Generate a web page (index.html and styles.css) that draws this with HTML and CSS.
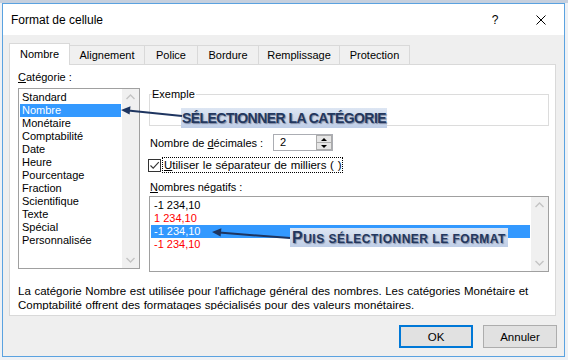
FILE: index.html
```html
<!DOCTYPE html>
<html>

<head>
	<title>Format de cellule</title>
	<link rel="stylesheet" href="styles.css">
</head>
<body>
<div id="screen">
	<div class="dialog">
		<div class="titlebar">
			<span class="title">Format de cellule</span>
			<span class="capbtn help">?</span>
			<span class="capbtn">
				<svg width="10" height="10" viewBox="0 0 10 10"><path d="M0.5 0.5 L9.5 9.5 M9.5 0.5 L0.5 9.5" stroke="#000" stroke-width="1" fill="none"/></svg>
			</span>
		</div>
		<div class="dlg-body">
			<div class="tabs">
				<div class="tab active" style="width:61px">Nombre</div>
				<div class="tab" style="width:76px">Alignement</div>
				<div class="tab" style="width:54px">Police</div>
				<div class="tab" style="width:62px">Bordure</div>
				<div class="tab" style="width:82px">Remplissage</div>
				<div class="tab" style="width:71px">Protection</div>
			</div>
			<div class="panel">
				<div class="cols">
					<div class="left-col">
						<div class="lbl"><u>C</u>atégorie :</div>
						<div class="listbox cat-list">
							<div class="items">
								<div class="item">Standard</div>
								<div class="item selected">Nombre</div>
								<div class="item">Monétaire</div>
								<div class="item">Comptabilité</div>
								<div class="item">Date</div>
								<div class="item">Heure</div>
								<div class="item">Pourcentage</div>
								<div class="item">Fraction</div>
								<div class="item">Scientifique</div>
								<div class="item">Texte</div>
								<div class="item">Spécial</div>
								<div class="item">Personnalisée</div>
							</div>
							<div class="scrollbar">
								<svg width="17" height="17" viewBox="0 0 17 17"><path d="M4.5 10 L8.5 6 L12.5 10" stroke="#c4c4c4" stroke-width="1.4" fill="none"/></svg>
								<svg width="17" height="17" viewBox="0 0 17 17"><path d="M4.5 7 L8.5 11 L12.5 7" stroke="#c4c4c4" stroke-width="1.4" fill="none"/></svg>
							</div>
						</div>
					</div>
					<div class="right-col">
						<fieldset class="example">
							<legend>Exemple</legend>
							<div class="example-in"></div>
						</fieldset>
						<div class="row decimals">
							<span class="row-lbl">Nombre de <u>d</u>écimales :</span>
							<div class="spinner">
								<span class="spin-val">2</span>
								<div class="spin-btns">
									<span class="spin-btn"><i class="tri-up"></i></span>
									<span class="spin-btn"><i class="tri-down"></i></span>
								</div>
							</div>
						</div>
						<div class="row check">
							<span class="checkbox">
								<svg width="11" height="11" viewBox="0 0 11 11"><path d="M1.5 5.5 L4.2 8.2 L9.8 2.2" stroke="#333" stroke-width="1.1" fill="none"/></svg>
							</span>
							<span class="focus-lbl"><u>U</u>tiliser le séparateur de milliers ( )</span>
						</div>
						<div class="lbl neg-lbl"><u>N</u>ombres négatifs :</div>
						<div class="listbox neg-list">
							<div class="items">
								<div class="item">-1 234,10</div>
								<div class="item red">1 234,10</div>
								<div class="item selected">-1 234,10</div>
								<div class="item red">-1 234,10</div>
							</div>
							<div class="scrollbar">
								<svg width="17" height="17" viewBox="0 0 17 17"><path d="M4.5 10 L8.5 6 L12.5 10" stroke="#c4c4c4" stroke-width="1.4" fill="none"/></svg>
								<svg width="17" height="17" viewBox="0 0 17 17"><path d="M4.5 7 L8.5 11 L12.5 7" stroke="#c4c4c4" stroke-width="1.4" fill="none"/></svg>
							</div>
						</div>
					</div>
				</div>
				<p class="desc">La catégorie Nombre est utilisée pour l'affichage général des nombres. Les catégories Monétaire et Comptabilité offrent des formatages spécialisés pour des valeurs monétaires.</p>
			</div>
			<div class="buttons">
				<button class="btn default">OK</button>
				<button class="btn">Annuler</button>
			</div>
		</div>
	</div>

	<div class="note note-cat">SÉLECTIONNER LA CATÉGORIE</div>
	<div class="note note-fmt"><span class="big">P</span>UIS SÉLECTIONNER LE FORMAT</div>

	<svg class="arrows" width="568" height="360" viewBox="0 0 568 360">
		<path d="M182 116 L128 110.6" stroke="#1e3560" stroke-width="2" fill="none"/>
		<polygon points="121,110 130.5,106.2 129.6,114.6" fill="#1e3560"/>
		<path d="M290 238 L219 232.6" stroke="#1e3560" stroke-width="2" fill="none"/>
		<polygon points="212,232 221.4,228.2 220.6,236.6" fill="#1e3560"/>
	</svg>
</div>
</body>

</html>
```

FILE: styles.css
```css
body {
	margin: 0;
	font-family: "Segoe UI", "Liberation Sans", sans-serif;
	font-size: 11px;
	color: #000;
}

#screen {
	position: relative;
	width: 568px;
	height: 360px;
	overflow: hidden;
	box-sizing: border-box;
	padding: 3px 0 0 2px;
	background: linear-gradient(#c6d0de 0 3px, #eef1f5 3px);
}

.dialog {
	width: 563px;
	height: 354px;
	box-sizing: border-box;
	border: 1px solid #5aa2e0;
	background: #efefef;
	display: flex;
	flex-direction: column;
}

.titlebar {
	height: 31px;
	flex-shrink: 0;
	background: #fff;
	display: flex;
	align-items: center;
}
.title {
	padding-left: 8px;
	font-size: 12px;
}
.capbtn {
	width: 46px;
	height: 31px;
	display: flex;
	align-items: center;
	justify-content: center;
	font-size: 12px;
}
.help {
	margin-left: auto;
}

.dlg-body {
	flex: 1;
	padding: 8px 8px 0 6px;
}

/* tabs */
.tabs {
	display: flex;
	align-items: flex-end;
	height: 21px;
}
.tab {
	box-sizing: border-box;
	height: 19px;
	border: 1px solid #d9d9d9;
	border-bottom: none;
	margin-left: -1px;
	background: #f0f0f0;
	display: flex;
	align-items: center;
	justify-content: center;
}
.tab.active {
	margin-left: 0;
	height: 22px;
	margin-bottom: -1px;
	background: #fff;
	position: relative;
	z-index: 1;
	padding-bottom: 1px;
}

.panel {
	width: 547px;
	height: 252px;
	box-sizing: border-box;
	border: 1px solid #d9d9d9;
	background: #fff;
	padding: 6px 6px 0 8px;
	overflow: hidden;
}

.cols {
	display: flex;
	gap: 9px;
}
.left-col {
	width: 122px;
}
.right-col {
	width: 400px;
	padding-top: 17px;
}

.lbl {
	line-height: 13px;
	height: 13px;
	margin-bottom: 4px;
}

.listbox {
	box-sizing: border-box;
	border: 1px solid #a0a0a0;
	background: #fff;
	display: flex;
}
.cat-list {
	height: 181px;
}
.items {
	flex: 1;
	padding: 2px 1px 0 1px;
}
.item {
	height: 13px;
	line-height: 13px;
	padding-left: 2px;
	white-space: nowrap;
}
.item.selected {
	background: #3399ff;
	color: #fff;
}
.item.red {
	color: #ff0000;
}
.scrollbar {
	width: 17px;
	background: #f0f0f0;
	display: flex;
	flex-direction: column;
	justify-content: space-between;
}

/* right column */
.example {
	margin: 0;
	padding: 0;
	border: 1px solid #dcdcdc;
}
.example legend {
	margin-left: 2px;
	padding: 0 1px 0 0;
	line-height: 13px;
}
.example-in {
	height: 24px;
}

.row {
	display: flex;
	align-items: center;
}
.decimals {
	margin-top: 8px;
	height: 17px;
}
.row-lbl {
	width: 124px;
	padding-left: 1px;
	box-sizing: border-box;
}
.spinner {
	width: 60px;
	height: 17px;
	box-sizing: border-box;
	border: 1px solid #abadb3;
	display: flex;
	align-items: center;
}
.spin-val {
	padding-left: 6px;
	line-height: 15px;
}
.spin-btns {
	margin-left: auto;
	width: 16px;
	height: 15px;
	display: flex;
	flex-direction: column;
}
.spin-btn {
	flex: 1;
	box-sizing: border-box;
	border: 1px solid #acacac;
	background: #e6e6e6;
	display: flex;
	align-items: center;
	justify-content: center;
}
.spin-btn + .spin-btn {
	border-top: none;
}
.tri-up {
	border-left: 3px solid transparent;
	border-right: 3px solid transparent;
	border-bottom: 3px solid #000;
}
.tri-down {
	border-left: 3px solid transparent;
	border-right: 3px solid transparent;
	border-top: 3px solid #000;
}

.check {
	margin-top: 6px;
	height: 16px;
}
.checkbox {
	width: 13px;
	height: 13px;
	box-sizing: border-box;
	border: 1px solid #333;
	background: #fff;
	display: flex;
	align-items: center;
	justify-content: center;
	margin-left: -1px;
}
.focus-lbl {
	margin-left: 1px;
	border: 1px dotted #000;
	padding: 0 1px;
	line-height: 14px;
	font-size: 11.5px;
	word-spacing: 0.5px;
}

.neg-lbl {
	margin-top: 8px;
	margin-bottom: 2px;
	padding-left: 1px;
}
.neg-list {
	height: 76px;
}
.neg-list .items {
	padding-top: 2px;
}
.neg-list .item {
	padding-left: 3px;
}

.desc {
	margin: 12px 0 0 0;
	line-height: 14px;
	height: 26px;
	overflow: hidden;
	font-size: 11.5px;
	word-spacing: 0.4px;
}

.buttons {
	display: flex;
	justify-content: flex-end;
	gap: 10px;
	margin-top: 9px;
	width: 548px;
}
.btn {
	width: 74px;
	height: 23px;
	box-sizing: border-box;
	border: 1px solid #adadad;
	background: #e1e1e1;
	font-family: inherit;
	font-size: 11.5px;
	padding: 0;
	color: #000;
}
.btn.default {
	border: 2px solid #0078d7;
}

/* annotations laid over the dialog */
.note {
	position: absolute;
	font-family: "Liberation Sans", sans-serif;
	font-weight: bold;
	color: #23375e;
	background: linear-gradient(#dde6f3, #bfcee7);
	text-shadow: 1px 1px 1px rgba(30, 40, 70, 0.45);
	white-space: nowrap;
}
.note-cat {
	left: 181px;
	top: 108px;
	width: 206px;
	height: 20px;
	line-height: 21px;
	font-size: 14px;
	letter-spacing: -0.55px;
	padding-left: 1px;
	box-sizing: border-box;
}
.note-fmt {
	left: 290px;
	top: 228px;
	width: 218px;
	height: 19px;
	line-height: 20px;
	font-size: 12px;
	letter-spacing: 0.5px;
	padding-left: 2px;
	box-sizing: border-box;
}
.note-fmt .big {
	font-size: 16px;
}

.arrows {
	position: absolute;
	left: 0;
	top: 0;
	pointer-events: none;
}
```
